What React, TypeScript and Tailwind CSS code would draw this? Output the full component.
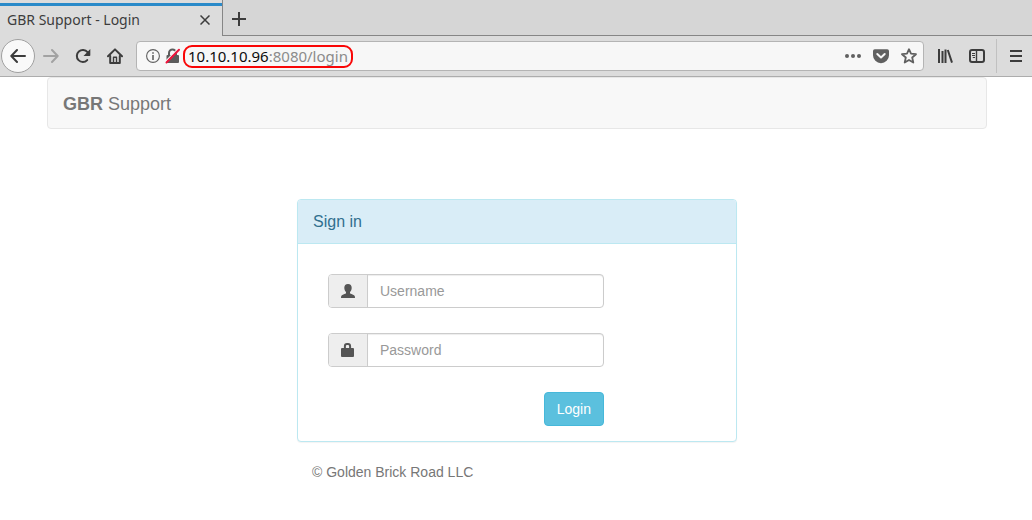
import React from "react";

function BackIcon() {
  return (
    <svg viewBox="0 0 16 16" className="size-4" fill="none" stroke="currentColor" strokeWidth="2" strokeLinecap="round" strokeLinejoin="round">
      <path d="M15 8H1.5M7 2 1.3 8 7 14" />
    </svg>
  );
}

function ForwardIcon() {
  return (
    <svg viewBox="0 0 16 16" className="size-4" fill="none" stroke="currentColor" strokeWidth="2" strokeLinecap="round" strokeLinejoin="round">
      <path d="M1 8h13.5M9 2l5.7 6L9 14" />
    </svg>
  );
}

function ReloadIcon() {
  return (
    <svg viewBox="0 0 16 16" className="size-4">
      <path d="M12.2 12.1A6 6 0 1 1 12.500 4.200" fill="none" stroke="currentColor" strokeWidth="2" strokeLinecap="round" />
      <path d="M15.3 1v6.300a.7.7 0 0 1-.7.7H8.500z" fill="currentColor" />
    </svg>
  );
}

function HomeIcon() {
  return (
    <svg viewBox="0 0 16 16" className="size-4" fill="none" stroke="currentColor" strokeLinecap="round" strokeLinejoin="round">
      <path d="M1 8.3 8 1.4l7 6.9" strokeWidth="2" />
      <path d="M3.2 8v7h9.6V8" strokeWidth="2" />
      <path d="M6.500 14.500V9.3h3v5.200" strokeWidth="1.400" />
    </svg>
  );
}

function InfoIcon() {
  return (
    <svg viewBox="0 0 14 14" className="size-3.5">
      <circle cx="7" cy="7" r="6.4" fill="none" stroke="currentColor" strokeWidth="1.1" />
      <path d="M6.2 3.2h1.6v1.6H6.2zM6.2 6h1.6v5H6.2z" fill="currentColor" />
    </svg>
  );
}

function InsecureLockIcon() {
  return (
    <svg viewBox="0 0 16 16" className="size-4">
      <path d="M4 8V5a3.500 3.500 0 0 1 7 0v3" fill="none" stroke="#5c5c5c" strokeWidth="2" />
      <rect x="1.500" y="7" width="12.500" height="8" rx="1" fill="#5c5c5c" />
      <path d="M.5 13.500 12.500 1.200" stroke="#f7f7f7" strokeWidth="1.200" />
      <path d="M1.5 14.500 14 1.800" stroke="#f0143c" strokeWidth="2" strokeLinecap="round" />
    </svg>
  );
}

function DotsIcon() {
  return (
    <svg viewBox="0 0 16 16" className="size-4" fill="currentColor">
      <circle cx="2" cy="8" r="2" />
      <circle cx="8" cy="8" r="2" />
      <circle cx="14" cy="8" r="2" />
    </svg>
  );
}

function PocketIcon() {
  return (
    <svg viewBox="0 0 16 16" className="size-4">
      <path d="M1.8 1.2h12.4A1.8 1.8 0 0 1 16 3v4.2a8 8 0 0 1-16 0V3a1.8 1.8 0 0 1 1.8-1.8z" fill="currentColor" />
      <path d="M4.3 6 8 9.5 11.7 6" fill="none" stroke="#f7f7f7" strokeWidth="2" strokeLinecap="round" strokeLinejoin="round" />
    </svg>
  );
}

function StarIcon() {
  return (
    <svg viewBox="0 0 16 16" className="size-4" fill="none" stroke="currentColor" strokeWidth="1.8" strokeLinejoin="round">
      <path d="m8 1.2 2 4.5 5 .5-3.8 3.3 1.1 5L8 12l-4.3 2.5 1.1-5L1 6.2l5-.5z" />
    </svg>
  );
}

function LibraryIcon() {
  return (
    <svg viewBox="0 0 16 16" className="size-4" fill="none" stroke="currentColor" strokeWidth="2">
      <path d="M2 1v14M5.500 3v12M8.500 1.5V15M10.800 2l4.200 12.6" />
    </svg>
  );
}

function SidebarIcon() {
  return (
    <svg viewBox="0 0 16 16" className="size-4" fill="none" stroke="currentColor">
      <rect x="1" y="2" width="14" height="12" rx="2" strokeWidth="2" />
      <path d="M7.5 2v12" strokeWidth="1.4" />
      <path d="M3 5.5h3M3 7.5h3M3.8 9.5H6" strokeWidth="1" />
    </svg>
  );
}

function MenuIcon() {
  return (
    <svg viewBox="0 0 16 16" className="size-4" fill="none" stroke="currentColor" strokeWidth="2">
      <path d="M2 3h12M2 8h12M2 13h12" />
    </svg>
  );
}

function UserIcon() {
  return (
    <svg viewBox="0 0 14 14" className="size-3.5" fill="#555">
      <path d="M7 0c2.500 0 3.700 1.400 3.700 3.800 0 1.900-.7 3.400-1.700 4.200v1.200c.3.500 4 1.600 4.600 2.500.3.500.4 1.200.4 2.300H0c0-1.100.1-1.800.4-2.300.6-.9 4.300-2 4.600-2.500V8c-1-.8-1.700-2.300-1.700-4.200C3.300 1.400 4.500 0 7 0z" />
    </svg>
  );
}

function LockIcon() {
  return (
    <svg viewBox="0 0 14 14" className="size-3.5">
      <path d="M3.900 6V3.200Q3.900 1 6 1h1q2.100 0 2.100 2.200V6" fill="none" stroke="#555" strokeWidth="2" />
      <rect x="0" y="5" width="13" height="9" rx="1" fill="#555" />
    </svg>
  );
}

function Browser() {
  return (
    <header className="bg-[#dcdcdc] font-['Noto_Sans',sans-serif] text-[#3c3c3c]">
      <div className="flex h-9 bg-[#d6d6d6]">
        <div className="flex w-[223px] flex-col border-r border-[#868686] bg-[#dcdcdc] pt-[3px]">
          <div className="h-[3px] bg-[#2a8ac9]" />
          <div className="flex flex-1 items-center justify-between pr-[7px] pb-0.5 pl-[7px] text-[14px] leading-5">
            <span>GBR Support - Login</span>
            <button aria-label="Close tab" className="flex size-5 items-center justify-center">
              <svg viewBox="0 0 10 10" className="size-2.5" stroke="currentColor" strokeWidth="1.500">
                <path d="m.5.500 9 9M9.500.500l-9 9" />
              </svg>
            </button>
          </div>
        </div>
        <div className="flex flex-1 items-center border-b border-[#868686] pt-[3px] pl-2">
          <button aria-label="New tab" className="flex size-4 items-center justify-center">
            <svg viewBox="0 0 14 14" className="size-3.5" stroke="currentColor" strokeWidth="2">
              <path d="M7 0v14M0 7h14" />
            </svg>
          </button>
        </div>
      </div>
      <div className="flex h-[41px] items-center border-b border-[#adadad] pr-2 pl-px">
        <button aria-label="Back" className="flex size-[34px] shrink-0 items-center justify-center rounded-full border border-[#a0a0a0] bg-[#f9f9f9]">
          <BackIcon />
        </button>
        <div className="flex shrink-0 items-center gap-4 pr-[13px] pl-2">
          <button aria-label="Forward" className="text-[#a2a2a2]"><ForwardIcon /></button>
          <button aria-label="Reload"><ReloadIcon /></button>
          <button aria-label="Home"><HomeIcon /></button>
        </div>
        <div className="flex h-[30px] min-w-0 flex-1 items-center rounded-[4px] border border-[#b4b4b4] bg-[#f7f7f7] pr-1.5 pl-[9px] text-[#606060]">
          <InfoIcon />
          <div className="ml-[5px]"><InsecureLockIcon /></div>
          <div className="ml-0.5 flex h-[23px] items-center rounded-[9px] border-2 border-[#f90606] px-[3px] text-[15px] leading-5 text-[#8b8b8b]">
            <span className="text-[#0c0c0c]">10.10.10.96</span>
            <span>:8080/login</span>
          </div>
          <div className="ml-auto flex items-center gap-3">
            <button aria-label="Page actions"><DotsIcon /></button>
            <button aria-label="Save to Pocket"><PocketIcon /></button>
            <button aria-label="Bookmark"><StarIcon /></button>
          </div>
        </div>
        <div className="flex shrink-0 items-center gap-4 pr-[11px] pl-[13px]">
          <button aria-label="Library"><LibraryIcon /></button>
          <button aria-label="Sidebar"><SidebarIcon /></button>
        </div>
        <div className="h-[34px] w-px bg-[#c1c1c1]" />
        <button aria-label="Menu" className="ml-[11px] shrink-0"><MenuIcon /></button>
      </div>
    </header>
  );
}

function Field({ id, label, type, icon }: { id: string; label: string; type: string; icon: React.ReactNode }) {
  return (
    <div className="flex h-[34px] rounded-[4px] border border-[#ccc]">
      <label htmlFor={id} aria-label={label} className="flex w-[39px] items-center justify-center rounded-l-[3px] border-r border-[#ccc] bg-[#eee]">
        {icon}
      </label>
      <input
        id={id}
        type={type}
        placeholder={label}
        className="min-w-0 flex-1 rounded-r-[3px] px-3 text-[14px] leading-5 text-[#555] shadow-[inset_0_1px_1px_rgba(0,0,0,0.075)] outline-none placeholder:text-[#999]"
      />
    </div>
  );
}

export default function App() {
  return (
    <div className="bg-white">
      <Browser />
      <main className="mx-auto max-w-[942px] pl-0.5 font-['Liberation_Sans',Arial,sans-serif] text-[14px] leading-5 text-[#777]">
        <nav className="flex h-[52px] items-center rounded-[4px] border border-[#e7e7e7] bg-[#f8f8f8] px-[15px] pt-0.5">
          <a href="#" className="text-[18px] leading-5"><b>GBR</b> Support</a>
        </nav>
        <div className="mx-auto mt-[70px] w-full max-w-[440px]">
          <section className="rounded-[4px] border border-[#bce8f1] bg-white shadow-[0_1px_1px_rgba(0,0,0,0.05)]">
            <h1 className="rounded-t-[3px] border-b border-[#bce8f1] bg-[#d9edf7] px-[15px] pt-3 pb-[11px] text-[16px] leading-5 text-[#31708f]">Sign in</h1>
            <form className="px-[30px] pt-[30px] pb-[15px]" onSubmit={(e) => e.preventDefault()}>
              <div className="flex w-full max-w-[276px] flex-col gap-[25px]">
                <Field id="username" label="Username" type="text" icon={<UserIcon />} />
                <Field id="password" label="Password" type="password" icon={<LockIcon />} />
                <button type="submit" className="self-end rounded-[4px] border border-[#46b8da] bg-[#5bc0de] px-3 py-1.5 text-white">Login</button>
              </div>
            </form>
          </section>
          <footer className="mt-5 px-[15px]">© Golden Brick Road LLC</footer>
        </div>
      </main>
    </div>
  );
}
